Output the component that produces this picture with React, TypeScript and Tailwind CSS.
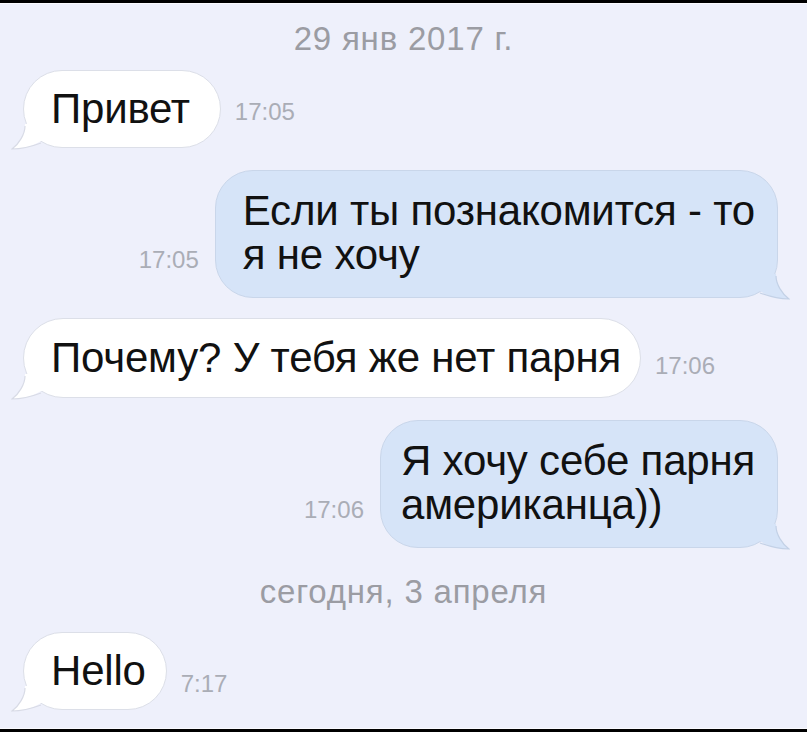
import React from "react";

const font = { fontFamily: '"Liberation Sans", Arial, sans-serif' };

function TailLeft() {
  return (
    <svg className="absolute -left-[13px] bottom-[-3px]" width="44" height="26" viewBox="0 0 44 26">
      <path d="M14 0 C14 10 8 20 1 25 C12 25 22 22 30 17 L44 17 L44 0 Z" fill="#ffffff" />
      <path d="M14 2 C14 10 8 20 1 25 C12 25 22 22 30 19" fill="none" stroke="#d8dbe6" strokeWidth="1.2" />
    </svg>
  );
}

function TailRight() {
  return (
    <svg className="absolute -right-[13px] bottom-[-3px]" width="44" height="26" viewBox="0 0 44 26">
      <path d="M30 0 C30 10 36 20 43 25 C32 25 22 22 14 17 L0 17 L0 0 Z" fill="#d6e4f8" />
      <path d="M30 2 C30 10 36 20 43 25 C32 25 22 22 14 19" fill="none" stroke="#c3d1e6" strokeWidth="1.2" />
    </svg>
  );
}

function InBubble({ text, time, h, pr, timeOffset }: { text: string; time: string; h: string; pr: string; timeOffset: string }) {
  return (
    <div className="flex items-end pl-[23px]">
      <div className={`relative flex items-center rounded-[40px] border border-[#dcdfe8] bg-white pl-[27px] ${pr} ${h}`}>
        <TailLeft />
        <span className="relative text-[42px] leading-none text-[#111] tracking-[-0.2px]" style={font}>{text}</span>
      </div>
      <span className={`ml-[14px] text-[24px] leading-none text-[#aaadb6] ${timeOffset}`} style={font}>{time}</span>
    </div>
  );
}

function OutBubble({ lines, time, pl }: { lines: string[]; time: string; pl: string }) {
  return (
    <div className="flex items-end justify-end pr-[29px]">
      <span className="mr-[16px] mb-[26px] text-[24px] leading-none text-[#aaadb6]" style={font}>{time}</span>
      <div className={`relative rounded-[38px] border border-[#c9d6ea] bg-[#d6e4f8] ${pl} pr-[22px] pt-[18px] pb-[20px]`}>
        <TailRight />
        <div className="relative text-[42px] leading-[44px] text-[#111] tracking-[-0.2px]" style={font}>
          {lines.map((l) => (
            <div key={l}>{l}</div>
          ))}
        </div>
      </div>
    </div>
  );
}

export default function App() {
  return (
    <div className="flex h-[732px] w-[807px] flex-col overflow-hidden bg-[#eef0fb]">
      <div className="h-[3px] bg-black" />
      <div className="h-[1px] bg-[#fafafe]" />
      <div className="mt-[19px] text-center text-[33px] leading-[32px] tracking-[0.8px] text-[#9b9ca3]" style={font}>29 янв 2017 г.</div>
      <div className="mt-[15px]">
        <InBubble text="Привет" time="17:05" h="h-[78px]" pr="pr-[30px]" timeOffset="mb-[24px]" />
      </div>
      <div className="mt-[22px]">
        <OutBubble lines={["Если ты познакомится - то", "я не хочу"]} time="17:05" pl="pl-[27px]" />
      </div>
      <div className="mt-[20px]">
        <InBubble text="Почему? У тебя же нет парня" time="17:06" h="h-[80px]" pr="pr-[19px]" timeOffset="mb-[20px]" />
      </div>
      <div className="mt-[22px]">
        <OutBubble lines={["Я хочу себе парня", "американца))"]} time="17:06" pl="pl-[20px]" />
      </div>
      <div className="mt-[28px] text-center text-[33px] leading-[32px] tracking-[0.8px] text-[#9b9ca3]" style={font}>сегодня, 3 апреля</div>
      <div className="mt-[24px]">
        <InBubble text="Hello" time="7:17" h="h-[78px]" pr="pr-[20px]" timeOffset="mb-[14px]" />
      </div>
      <div className="flex-1" />
      <div className="h-[1px] bg-[#fafafe]" />
      <div className="h-[3px] bg-black" />
    </div>
  );
}
